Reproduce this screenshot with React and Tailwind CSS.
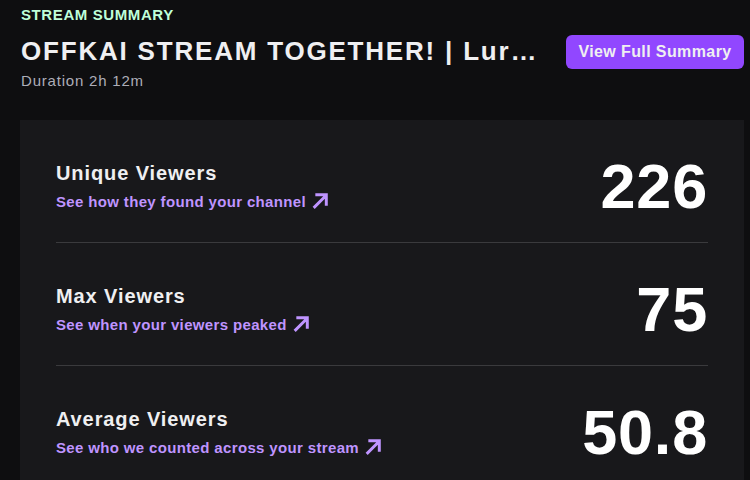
import React from "react";

const Arrow = () => (
  <svg width="19" height="19" viewBox="0 0 18 18" className="inline-block ml-[5px] -mt-[5px]">
    <path d="M3.5 15 L14 4.5 M5.5 3.5 H14.5 V12.5" stroke="#bf94ff" strokeWidth="2.8" fill="none" strokeLinecap="square" />
  </svg>
);

const rows = [
  { title: "Unique Viewers", link: "See how they found your channel", value: "226" },
  { title: "Max Viewers", link: "See when your viewers peaked", value: "75" },
  { title: "Average Viewers", link: "See who we counted across your stream", value: "50.8" },
];

export default function App() {
  return (
    <div
      className="w-[750px] h-[480px] overflow-hidden bg-[#0e0e10] text-white"
      style={{ fontFamily: '"Liberation Sans", Arial, sans-serif' }}
    >
      <div className="flex items-start justify-between pl-[21px] pr-[6px] pt-[5px]">
        <div className="flex flex-col min-w-0">
          <div className="text-[15px] font-bold leading-[20px] text-[#bfffd9] tracking-[0.6px]">STREAM SUMMARY</div>
          <div className="mt-[11px] text-[26px] font-bold leading-[30px] text-[#efeff1] w-[518px] truncate tracking-[1.8px]">
            OFFKAI STREAM TOGETHER! | Lurking Allowed
          </div>
          <div className="mt-[6px] text-[15px] leading-[18px] text-[#adadb8] tracking-[0.8px]">Duration 2h 12m</div>
        </div>
        <button className="mt-[30px] h-[34px] w-[178px] shrink-0 whitespace-nowrap rounded-[6px] bg-[#9147ff] text-[16px] font-bold text-[#efeff1] tracking-[0.4px]">
          View Full Summary
        </button>
      </div>
      <div className="ml-[20px] mr-[6px] mt-[30px] bg-[#18181b] px-[36px]">
        {rows.map((r, i) => (
          <div key={r.title}>
            {i > 0 && <div className="h-px bg-[#3a3a3d]" />}
            <div className="flex h-[122px] items-center justify-between pt-[10px]">
              <div className="flex flex-col">
                <div className="text-[20px] font-bold leading-[24px] text-[#efeff1] tracking-[0.9px]">{r.title}</div>
                <div className="mt-[8px] text-[15px] font-bold leading-[18px] text-[#bf94ff] tracking-[0.35px]">
                  {r.link}
                  <Arrow />
                </div>
              </div>
              <div className="text-[63px] font-bold leading-[64px] text-white tracking-[0.8px]">{r.value}</div>
            </div>
          </div>
        ))}
      </div>
    </div>
  );
}
